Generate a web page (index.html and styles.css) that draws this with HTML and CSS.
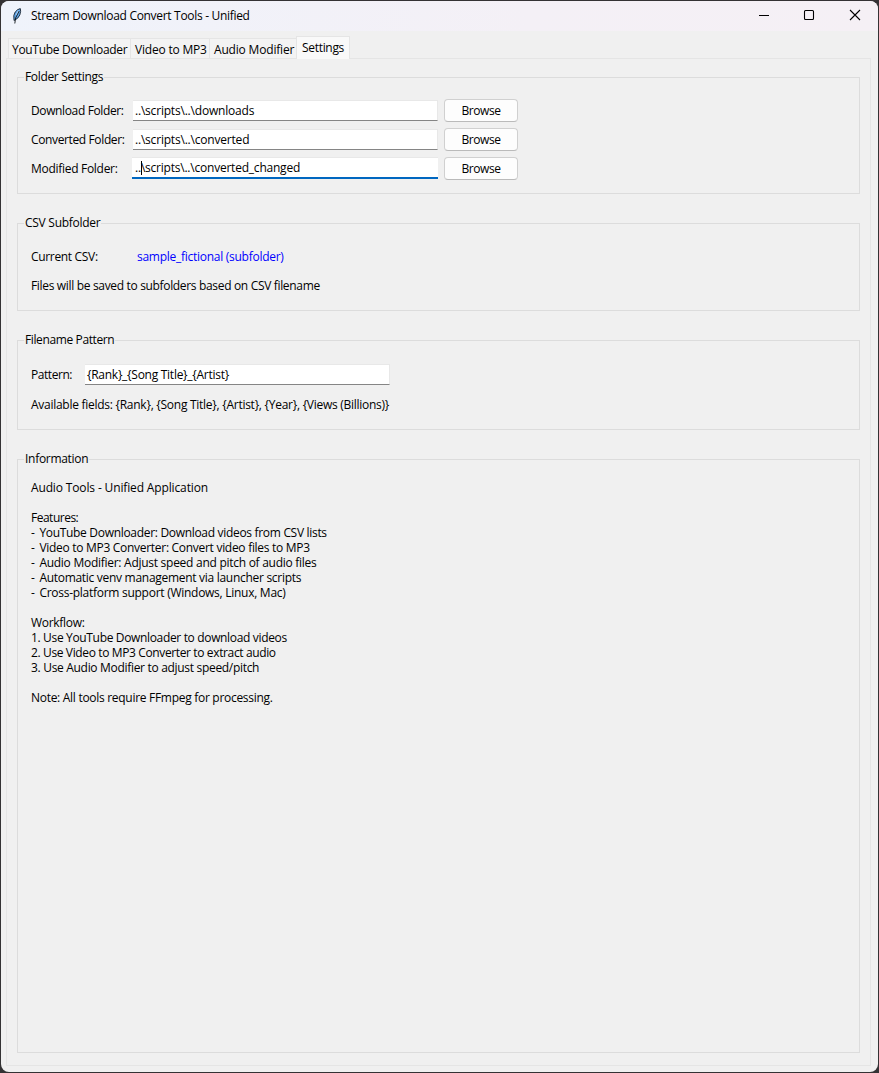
FILE: index.html
```html
<!DOCTYPE html>
<html lang="en">
<head>
<meta charset="utf-8">
<title>Stream Download Convert Tools - Unified</title>
<link rel="stylesheet" href="styles.css">
</head>
<body>
<div class="window">
  <header class="titlebar">
    <svg class="feather" width="12" height="18" viewBox="0 0 12 18">
      <path d="M3 13 Q2 8 4.2 5 Q6.5 2 9.3 1.6 Q10.2 4 8.8 8 Q7.5 11.5 3 13.5 Z" fill="#5fa5e8" stroke="#16202e" stroke-width=".9"/>
      <path d="M7.6 3.5 L5.2 8" stroke="#a4cdf5" stroke-width="1.4" fill="none"/>
      <path d="M8.2 4 L4.6 11 L3.8 16.5" stroke="#101418" stroke-width=".9" fill="none"/>
    </svg>
    <h1 class="title t30">Stream Download Convert Tools - Unified</h1>
    <svg class="controls" width="104" height="12" viewBox="0 0 104 12" fill="none" stroke="#000" stroke-width="1.1">
      <path d="M1 6.5H11"/>
      <rect x="46.5" y="1.5" width="9" height="9" rx="1"/>
      <path d="M92 1 L102 11 M102 1 L92 11"/>
    </svg>
  </header>
  <nav class="tabs">
    <div class="tab tab-youtube t30">YouTube Downloader</div>
    <div class="tab tab-video t20">Video to MP3</div>
    <div class="tab tab-audio t16">Audio Modifier</div>
    <div class="tab tab-active t30">Settings</div>
  </nav>
  <main class="pane">
    <section class="group folders">
      <h2 class="legend t32">Folder Settings</h2>
      <div class="folder-row">
        <label class="t36">Download Folder:</label>
        <div class="entry t20">..\scripts\..\downloads</div>
        <button class="browse t44">Browse</button>
      </div>
      <div class="folder-row">
        <label class="t36">Converted Folder:</label>
        <div class="entry t20">..\scripts\..\converted</div>
        <button class="browse t44">Browse</button>
      </div>
      <div class="folder-row">
        <label class="t28">Modified Folder:</label>
        <div class="entry focused t22">..<span class="caret"></span>\scripts\..\converted_changed</div>
        <button class="browse t44">Browse</button>
      </div>
    </section>
    <section class="group csv">
      <h2 class="legend t26">CSV Subfolder</h2>
      <div class="csv-row"><span class="t32">Current CSV:</span><span class="link t26">sample_fictional (subfolder)</span></div>
      <p class="t32">Files will be saved to subfolders based on CSV filename</p>
    </section>
    <section class="group pattern">
      <h2 class="legend t38">Filename Pattern</h2>
      <div class="pattern-row"><label class="t44">Pattern:</label><div class="entry t26">{Rank}_{Song Title}_{Artist}</div></div>
      <p class="t26">Available fields: {Rank}, {Song Title}, {Artist}, {Year}, {Views (Billions)}</p>
    </section>
    <section class="group info">
      <h2 class="legend t28">Information</h2>
      <p class="t12">Audio Tools - Unified Application</p>
      <p class="gap t50">Features:</p>
      <p class="t30"><span class="dash">- </span>YouTube Downloader: Download videos from CSV lists</p>
      <p class="t28"><span class="dash">- </span>Video to MP3 Converter: Convert video files to MP3</p>
      <p class="t26"><span class="dash">- </span>Audio Modifier: Adjust speed and pitch of audio files</p>
      <p class="t28"><span class="dash">- </span>Automatic venv management via launcher scripts</p>
      <p class="t26"><span class="dash">- </span>Cross-platform support (Windows, Linux, Mac)</p>
      <p class="gap t28">Workflow:</p>
      <p class="t34">1. Use YouTube Downloader to download videos</p>
      <p class="t36">2. Use Video to MP3 Converter to extract audio</p>
      <p class="t30">3. Use Audio Modifier to adjust speed/pitch</p>
      <p class="gap t28">Note: All tools require FFmpeg for processing.</p>
    </section>
  </main>
</div>
</body>
</html>
```
FILE: styles.css
```css
* { box-sizing: border-box; }
html { height: 100%; }
body {
  margin: 0;
  height: 100%;
  padding: 1px;
  background: #343234;
  color: #000;
  font: 12px/15px "Open Sans", "Noto Sans", sans-serif;
  overflow: hidden;
}
h1, h2, p { margin: 0; font-size: 12px; font-weight: 400; white-space: pre; }

.window {
  height: 1071px;
  border-radius: 8px;
  background: #f0f0f0;
  overflow: hidden;
  display: flex;
  flex-direction: column;
}
.titlebar {
  height: 30px;
  display: flex;
  align-items: center;
  background: linear-gradient(90deg, #eff3fb, #f4f0f6 60%, #f5f0f5);
}
.feather { margin-left: 10px; margin-top: -1px; }
.title { margin-left: 8px; margin-top: -2px; }
.controls { margin-left: auto; margin-right: 16px; margin-top: -2px; }

.tabs { display: flex; align-items: flex-end; height: 27px; padding-left: 7px; }
.tab {
  height: 20px;
  padding: 3px 0 0 4px;
  border: 1px solid #e5e5e5;
  border-width: 1px 0 0 1px;
  background: #f3f3f3;
  white-space: pre;
}
.tab-youtube { width: 122px; padding-left: 3px; }
.tab-video { width: 79px; }
.tab-audio { width: 87px; }
.tab-active {
  position: relative;
  z-index: 1;
  width: 54px;
  height: 23px;
  margin-bottom: -1px;
  padding-left: 5px;
  border-width: 1px 1px 0;
  background: #f9f9f9;
}

.pane {
  flex: 1;
  margin: 0 7px 6px 5px;
  padding: 18px 10px 12px;
  border: 1px solid #e5e5e5;
  display: flex;
  flex-direction: column;
}
.group { border: 1px solid #dcdcdc; padding: 0 13px; }
.legend {
  width: max-content;
  height: 15px;
  margin: -9px 0 0 -7px;
  padding: 0 1px;
  background: #f0f0f0;
}
.folders { height: 117px; margin-bottom: 29px; }
.csv { height: 88px; margin-bottom: 29px; }
.pattern { height: 90px; margin-bottom: 29px; }
.info { flex: 1; }

.folder-row {
  display: grid;
  grid-template-columns: 101px 306px 6px 74px;
  height: 24px;
  margin-bottom: 5px;
  align-items: center;
  white-space: pre;
}
.folder-row .browse { grid-column: 4; }
.folders .legend { margin-bottom: 14px; }
.entry {
  height: 21px;
  margin-left: 1px;
  padding: 2px 0 0 2px;
  border: 1px solid #e8e8e8;
  border-width: 1px 1px 1px 0;
  border-bottom-color: #858585;
  background: #fff;
  white-space: pre;
}
.focused {
  margin-left: 0;
  padding-left: 3px;
  border-right: 0;
  border-bottom: 2px solid #0067c0;
  height: 22px;
}
.caret {
  display: inline-block;
  width: 1px;
  height: 14px;
  margin-right: -1px;
  vertical-align: -3px;
  background: #000;
}
.browse {
  height: 23px;
  padding: 1px 0 0;
  border: 1px solid #d0d0d0;
  border-bottom-color: #bababa;
  border-radius: 4px;
  background: #fdfdfd;
  color: #000;
  font: 12px/15px "Open Sans", "Noto Sans", sans-serif;
}

.csv-row { display: grid; grid-template-columns: 106px 1fr; margin: 19px 0 14px; }
.link { color: #0000ff; }
.pattern-row { display: grid; grid-template-columns: 53px 306px; align-items: center; margin: 17px 0 12px; }
.info .legend { margin-bottom: 14px; }
.gap { margin-top: 15px; }
.dash { margin-right: 1.4px; letter-spacing: 0; }

/* Tracking steps that keep the labels at native dialog widths */
.t12 { letter-spacing: -.14px; }
.t16 { letter-spacing: -.18px; }
.t20 { letter-spacing: -.2px; }
.t22 { letter-spacing: -.22px; }
.t26 { letter-spacing: -.27px; }
.t28 { letter-spacing: -.29px; }
.t30 { letter-spacing: -.31px; }
.t32 { letter-spacing: -.33px; }
.t34 { letter-spacing: -.34px; }
.t36 { letter-spacing: -.37px; }
.t38 { letter-spacing: -.38px; }
.t44 { letter-spacing: -.44px; }
.t50 { letter-spacing: -.5px; }
```
